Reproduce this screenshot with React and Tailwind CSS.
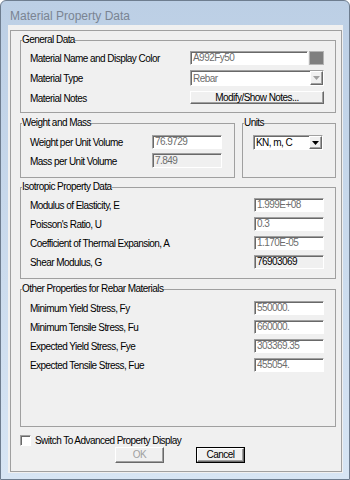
import React from "react";

const sunken =
  "border border-t-[#a0a0a0] border-l-[#a0a0a0] border-b-white border-r-white shadow-[inset_1px_1px_0_#696969]";
const raised =
  "border border-t-white border-l-white border-b-[#696969] border-r-[#696969] shadow-[inset_-1px_-1px_0_#a0a0a0]";

const Field = ({ value, w = "w-[70px]", h = "h-[14px]", bg = "bg-white", color = "text-[#6d6d6d]" }) => (
  <div className={`${sunken} ${w} ${h} ${bg} ${color} flex items-center pl-[2px] leading-none overflow-hidden`}>
    {value}
  </div>
);

const Arrow = ({ color }) => (
  <div className={`${raised} w-[13px] h-full bg-[#f0f0f0] flex items-center justify-center`}>
    <svg width="7" height="4" viewBox="0 0 7 4">
      <path d="M0 0 L7 0 L3.5 4 Z" fill={color} />
    </svg>
  </div>
);

const Group = ({ title, className = "", children }) => (
  <fieldset className={`border border-[#a0a0a0] px-0 ${className}`}>
    <legend className="ml-px px-0 leading-[12px]">{title}</legend>
    {children}
  </fieldset>
);

const Row = ({ label, labelW, children }) => (
  <div className="flex items-center">
    <div className={`${labelW} pt-[2px] leading-none`}>{label}</div>
    {children}
  </div>
);

const isotropic = [
  ["Modulus of Elasticity,  E", "1.999E+08"],
  ["Poisson's Ratio,  U", "0.3"],
  ["Coefficient of Thermal Expansion,  A", "1.170E-05"],
  ["Shear Modulus,  G", "76903069"],
];

const rebar = [
  ["Minimum Yield Stress, Fy", "550000."],
  ["Minimum Tensile Stress, Fu", "660000."],
  ["Expected Yield Stress, Fye", "303369.35"],
  ["Expected Tensile Stress, Fue", "455054."],
];

export default function App() {
  return (
    <div className="w-[350px] h-[480px] bg-linear-to-b from-[#bccfe5] to-[#d7e5f4] border border-[#6e7d8f] rounded-t-[6px] font-['Liberation_Sans',sans-serif] text-[10px] tracking-[-0.55px] text-black flex flex-col">
      <div className="h-[24px] pl-[9px] flex items-center text-[12px] tracking-normal text-[#7a8492] pt-[6px]">
        Material Property Data
      </div>
      <div className="ml-[7px] w-[335px] h-[448px] bg-[#f0f0f0] pt-[5px] pl-[2px]">
        <div className="w-[332px] h-[442px] border border-[#a0a0a0] flex flex-col">
          <div className="ml-[9px] mr-[5px] flex flex-col">
            <Group title="General Data" className="mt-[3px]">
              <div className="pl-[9px] pt-[5px] pb-[8px] flex flex-col">
                <Row label="Material Name and Display Color" labelW="w-[160px]">
                  <Field value="A992Fy50" w="w-[118px]" />
                  <div className="ml-px w-[15px] h-[14px] bg-[#7f7f7f] border border-[#b4b4b4]" />
                </Row>
                <div className="mt-[5px]">
                  <Row label="Material Type" labelW="w-[160px]">
                    <div className={`${sunken} w-[134px] h-[16px] bg-white flex items-center justify-between`}>
                      <span className="pl-[2px] text-[#6d6d6d]">Rebar</span>
                      <Arrow color="#a0a0a0" />
                    </div>
                  </Row>
                </div>
                <div className="mt-[5px]">
                  <Row label="Material Notes" labelW="w-[160px]">
                    <div className={`${raised} w-[134px] h-[13px] bg-[#f0f0f0] flex items-center justify-center leading-none`}>
                      Modify/Show Notes...
                    </div>
                  </Row>
                </div>
              </div>
            </Group>

            <div className="mt-[4px] flex gap-[7px]">
              <Group title="Weight and Mass" className="w-[215px]">
                <div className="pl-[9px] pt-[6px] pb-[9px] flex flex-col">
                  <Row label="Weight per Unit Volume" labelW="w-[122px]">
                    <Field value="76.9729" color="text-[#6d6d6d]" />
                  </Row>
                  <div className="mt-[4px]">
                    <Row label="Mass per Unit Volume" labelW="w-[122px]">
                      <Field value="7.849" h="h-[15px]" bg="bg-[#f0f0f0]" />
                    </Row>
                  </div>
                </div>
              </Group>
              <Group title="Units" className="flex-1">
                <div className="pl-[10px] pt-[6px]">
                  <div className={`${sunken} w-[70px] h-[15px] bg-white flex items-center justify-between`}>
                    <span className="pl-[2px] leading-none">KN, m, C</span>
                    <Arrow color="#000" />
                  </div>
                </div>
              </Group>
            </div>

            <Group title="Isotropic Property Data" className="mt-[3px]">
              <div className="pl-[9px] pt-[5px] pb-[9px] flex flex-col gap-[5px]">
                {isotropic.map(([label, value], i) => (
                  <Row key={label} label={label} labelW="w-[224px]">
                    {i === 3 ? (
                      <Field value={value} bg="bg-[#f0f0f0]" color="text-black" />
                    ) : (
                      <Field value={value} />
                    )}
                  </Row>
                ))}
              </div>
            </Group>

            <Group title="Other Properties for Rebar Materials" className="mt-[4px]">
              <div className="pl-[9px] pt-[6px] pb-[54px] flex flex-col gap-[5px]">
                {rebar.map(([label, value]) => (
                  <Row key={label} label={label} labelW="w-[224px]">
                    <Field value={value} />
                  </Row>
                ))}
              </div>
            </Group>

            <div className="mt-[7px] flex items-center h-[12px]">
              <div className={`${sunken} w-[11px] h-[11px] bg-white`} />
              <span className="ml-[4px] leading-none pt-px">Switch To Advanced Property Display</span>
            </div>

            <div className="mt-px flex">
              <div className={`${raised} ml-[95px] w-[49px] h-[16px] bg-[#f0f0f0] flex items-center justify-center text-[#a0a0a0] leading-none`}>
                OK
              </div>
              <div className="ml-[32px] w-[49px] h-[16px] border border-black flex">
                <div className={`${raised} flex-1 bg-[#f0f0f0] flex items-center justify-center leading-none`}>
                  Cancel
                </div>
              </div>
            </div>
          </div>
        </div>
      </div>
    </div>
  );
}
